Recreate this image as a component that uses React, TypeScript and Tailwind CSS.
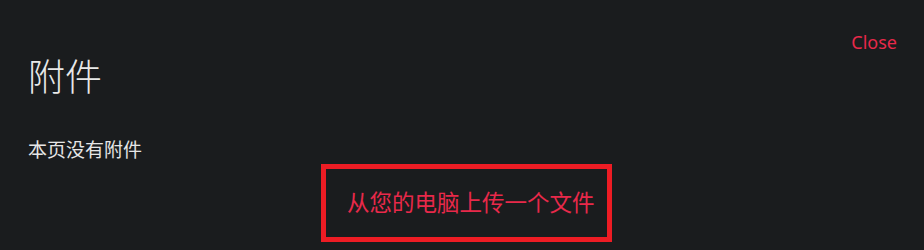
export default function App() {
  return (
    <div
      className="min-h-[250px] w-full bg-[#1a1c1e] text-[#e4e4e4]"
      style={{ fontFamily: '"Noto Sans", "Noto Sans CJK SC", sans-serif' }}
    >
      {/* Header */}
      <div className="flex justify-end pt-[30px] pr-[27px]">
        <a href="#" className="text-[18px] leading-[24px] text-[#e8294a]">
          Close
        </a>
      </div>

      <div className="px-[28px]">
        <h1 className="mt-[1px] text-[37px] leading-[44px] font-light text-[#e8e8e8]">附件</h1>
        <p className="mt-[39px] text-[19px] leading-[24px] text-[#e6e6e6]">本页没有附件</p>
      </div>

      <div className="flex justify-center pl-[9px] pt-[2px]">
        <div className="flex h-[78px] w-[291px] items-center border-[5px] border-[#ed1c24] pl-[21px]">
          <span className="text-[22.5px] leading-[28px] text-[#e8294a]">从您的电脑上传一个文件</span>
        </div>
      </div>
    </div>
  )
}
